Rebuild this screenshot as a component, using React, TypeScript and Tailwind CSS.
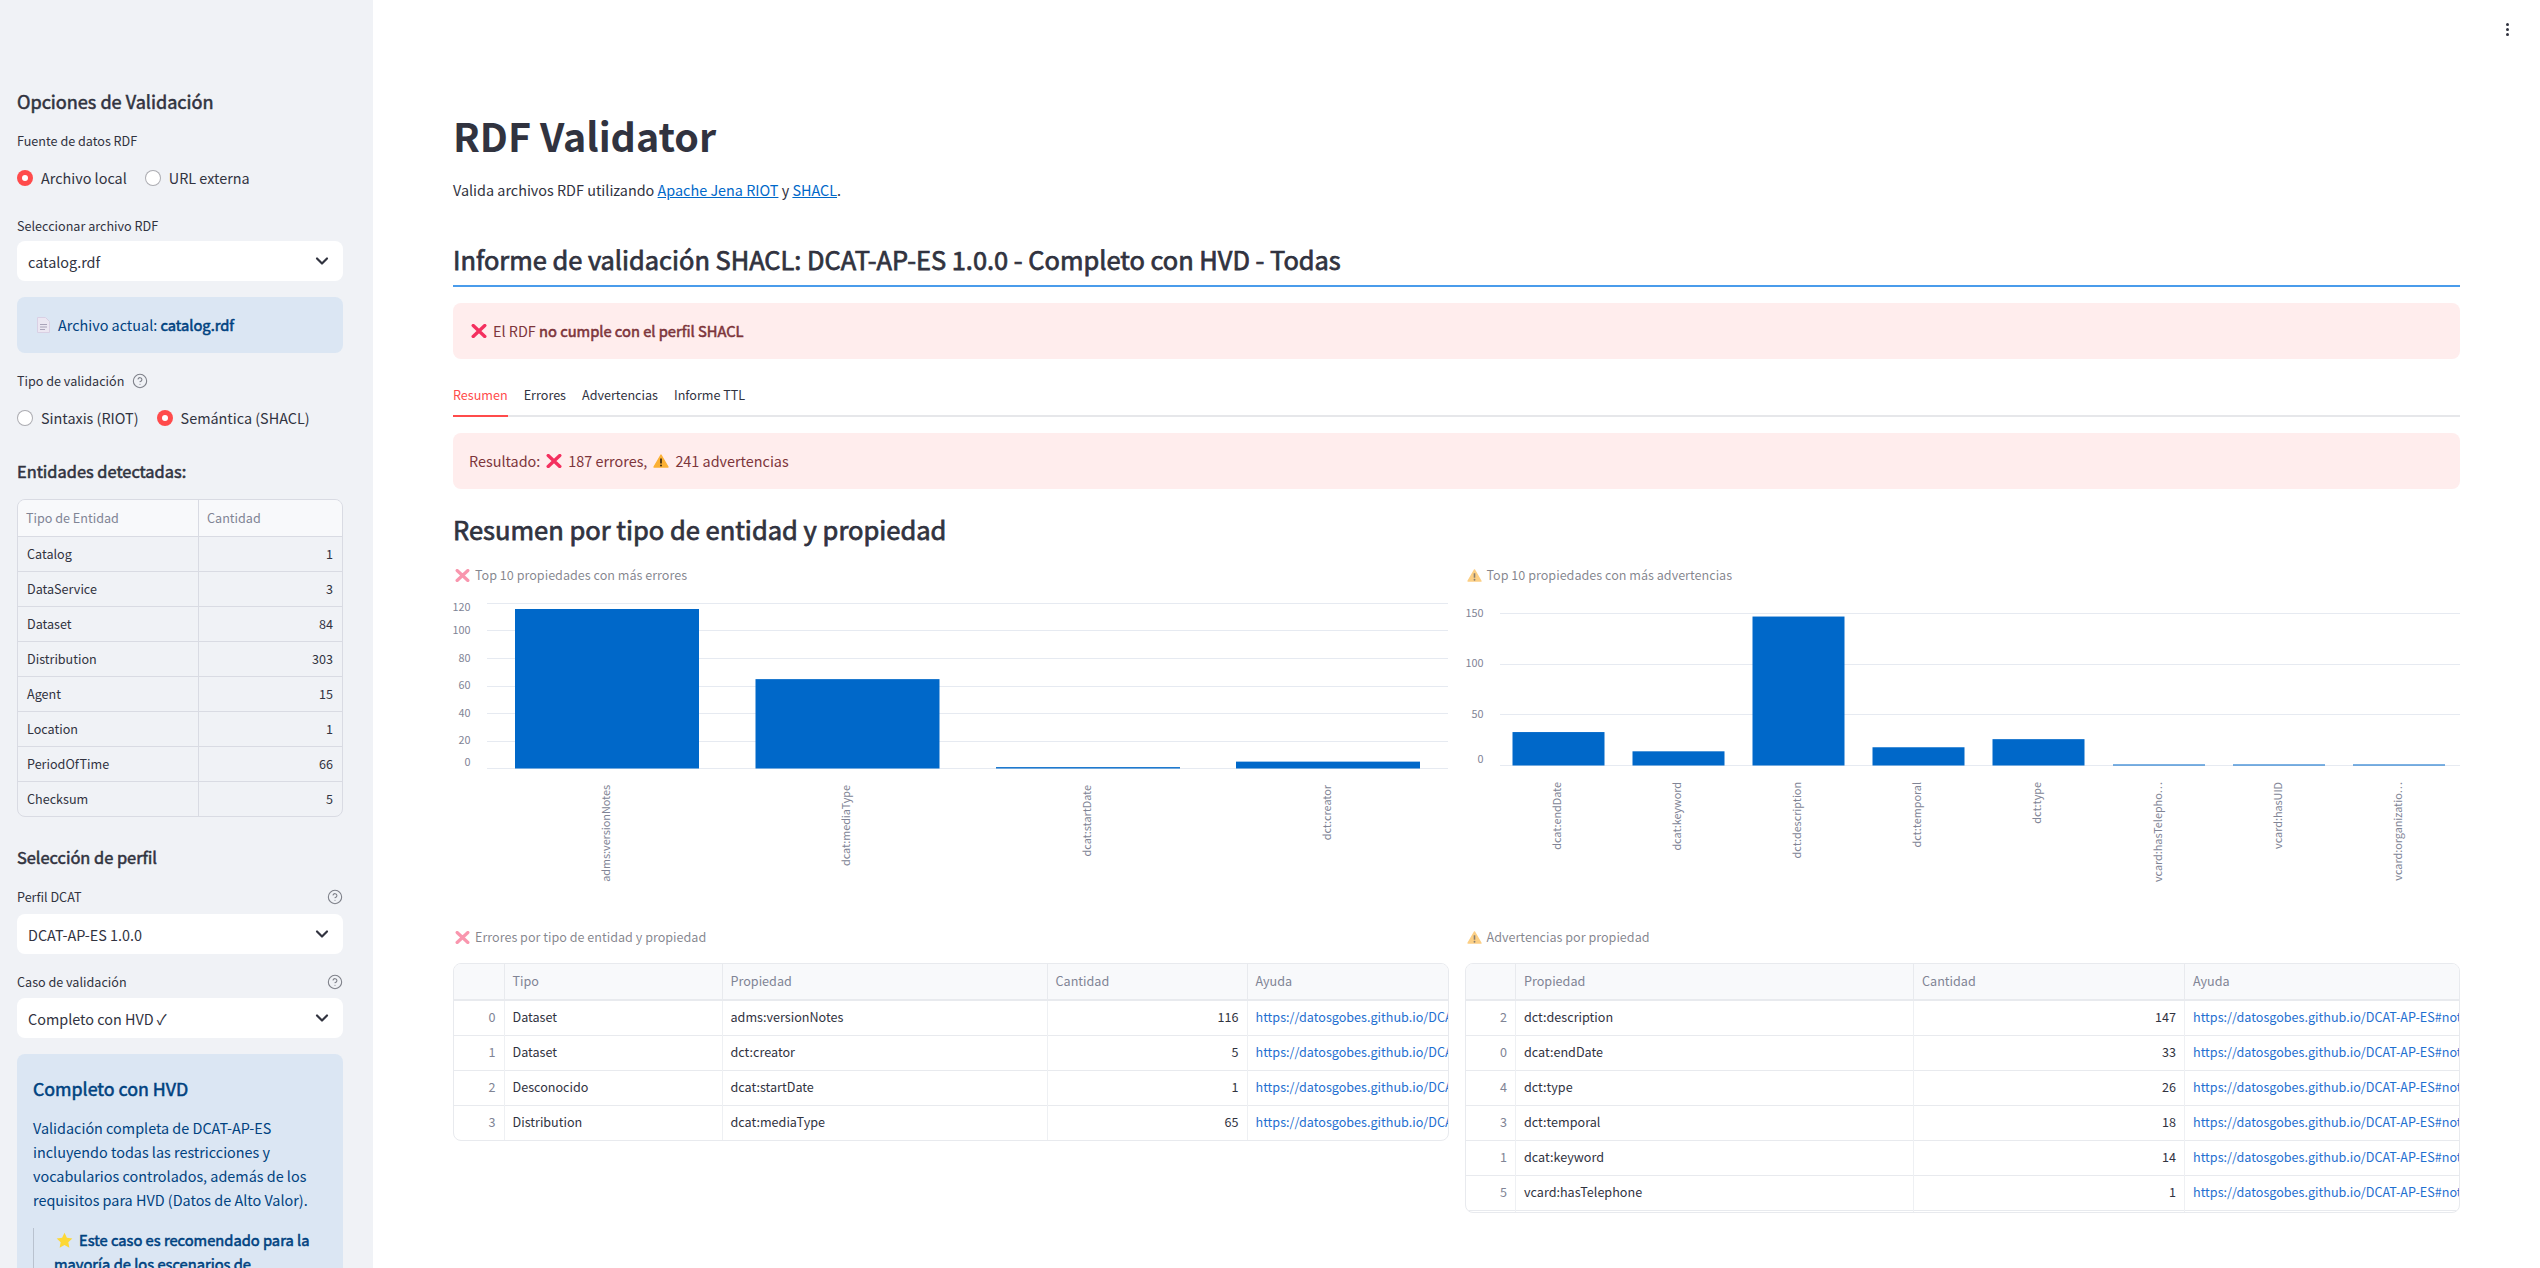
import { ChevronDown, CircleHelp } from "lucide-react";

// Noto Sans CJK carries Source Sans latin glyphs at a larger scale, hence the smaller sizes below
const FONT = "font-['Noto_Sans_CJK_SC','Noto_Sans',sans-serif]";
// only regular and bold are installed, so semibold headings get a thin stroke on regular
const SEMI = "font-normal [-webkit-text-stroke-width:0.55px]";
const SEMI_LARGE = "font-normal [-webkit-text-stroke-width:0.75px]";

const entities = [
  ["Catalog", 1],
  ["DataService", 3],
  ["Dataset", 84],
  ["Distribution", 303],
  ["Agent", 15],
  ["Location", 1],
  ["PeriodOfTime", 66],
  ["Checksum", 5],
] as const;

const errorRows = [
  [0, "Dataset", "adms:versionNotes", 116],
  [1, "Dataset", "dct:creator", 5],
  [2, "Desconocido", "dcat:startDate", 1],
  [3, "Distribution", "dcat:mediaType", 65],
] as const;

const warningRows = [
  [2, "dct:description", 147],
  [0, "dcat:endDate", 33],
  [4, "dct:type", 26],
  [3, "dct:temporal", 18],
  [1, "dcat:keyword", 14],
  [5, "vcard:hasTelephone", 1],
  [6, "vcard:hasUID", 1],
] as const;

function CrossIcon({ className }: { className?: string }) {
  return (
    <svg viewBox="0 0 16 14" className={className} aria-hidden="true">
      <path d="M2.2 1.6 L13.8 12.4 M13.8 1.6 L2.2 12.4" stroke="#f4305f" strokeWidth="3.4" strokeLinecap="round" fill="none" />
    </svg>
  );
}

function WarnIcon({ className }: { className?: string }) {
  return (
    <svg viewBox="0 0 16 14" className={className} aria-hidden="true">
      <path d="M8 1 L15 13 H1 Z" fill="#fbb034" stroke="#fbb034" strokeWidth="1.4" strokeLinejoin="round" />
      <path d="M8 4.6 V9.4" stroke="#3b2a12" strokeWidth="1.7" />
      <circle cx="8" cy="11.6" r="1" fill="#3b2a12" />
    </svg>
  );
}

function Radio({ label, checked }: { label: string; checked?: boolean }) {
  return (
    <div className="flex items-center gap-2">
      {checked ? (
        <span className="flex h-4 w-4 items-center justify-center rounded-full bg-[#ff4b4b]">
          <span className="h-1.5 w-1.5 rounded-full bg-white" />
        </span>
      ) : (
        <span className="h-4 w-4 rounded-full border border-[#31333f66] bg-white" />
      )}
      <span className="text-[14.4px] leading-6">{label}</span>
    </div>
  );
}

function FieldLabel({ children, className }: { children: React.ReactNode; className?: string }) {
  return <div className={`text-[12.6px] leading-5 ${className ?? ""}`}>{children}</div>;
}

function Help() {
  return <CircleHelp size={16} strokeWidth={1.6} className="text-[#31333f99]" />;
}

function SelectBox({ value, className }: { value: string; className?: string }) {
  return (
    <div className={`flex h-10 items-center justify-between rounded-lg bg-white pl-[11px] pr-[11px] text-[14.4px] ${className ?? ""}`}>
      <span className="pt-px">{value}</span>
      <ChevronDown size={20} strokeWidth={2.6} className="text-[#31333f]" />
    </div>
  );
}

function Sidebar() {
  return (
    <aside className="h-screen w-[373px] shrink-0 overflow-hidden bg-[#f0f2f6] pl-[17px] pr-[30px] pt-[87px]">
      <h2 className={`text-[18.1px] leading-7 ${SEMI}`}>Opciones de Validación</h2>
      <FieldLabel className="mt-4">Fuente de datos RDF</FieldLabel>
      <div className="mt-[15px] flex gap-[18px]">
        <Radio label="Archivo local" checked />
        <Radio label="URL externa" />
      </div>
      <FieldLabel className="mt-[26px]">Seleccionar archivo RDF</FieldLabel>
      <SelectBox value="catalog.rdf" className="mt-[5px]" />
      <div className="mt-4 flex h-14 items-center rounded-lg bg-[#dbe6f3] pl-[20px] text-[14.4px] text-[#004280]">
        <svg viewBox="0 0 13 16" className="mr-2 h-4 w-[13px]" aria-hidden="true">
          <path d="M.5 .5 H8.5 L12.5 4.5 V15.5 H.5 Z" fill="#ece7f2" stroke="#d9d0e4" />
          <path d="M3 7.5 H10 M3 10 H10 M3 12.5 H8" stroke="#a9a3b8" strokeWidth="1" />
        </svg>
        <span>
          Archivo actual: <b className={`text-[14.7px] ${SEMI}`}>catalog.rdf</b>
        </span>
      </div>
      <FieldLabel className="mt-[18px] flex items-center gap-2">
        Tipo de validación
        <Help />
      </FieldLabel>
      <div className="mt-[15px] flex gap-[18px]">
        <Radio label="Sintaxis (RIOT)" />
        <Radio label="Semántica (SHACL)" checked />
      </div>
      <h3 className={`mt-[27px] text-[16.4px] leading-7 ${SEMI}`}>Entidades detectadas:</h3>
      <div className="mt-[14px] overflow-hidden rounded-lg border border-[#d9dbe3] text-[12.6px]">
        <div className="flex h-9 items-center bg-[#f8f9fb] text-[#808495]">
          <div className="w-[181px] border-r border-[#d9dbe3] pl-[8px] leading-9">Tipo de Entidad</div>
          <div className="pl-[8px]">Cantidad</div>
        </div>
        {entities.map(([name, count]) => (
          <div key={name} className="flex h-[35px] items-center border-t border-[#d9dbe3]">
            <div className="w-[181px] border-r border-[#d9dbe3] pl-[9px] leading-[34px]">{name}</div>
            <div className="flex-1 pr-[9px] text-right">{count}</div>
          </div>
        ))}
      </div>
      <h3 className={`mt-[26px] text-[16.4px] leading-7 ${SEMI}`}>Selección de perfil</h3>
      <FieldLabel className="mt-4 flex items-center justify-between">
        Perfil DCAT
        <Help />
      </FieldLabel>
      <SelectBox value="DCAT-AP-ES 1.0.0" className="mt-[7px]" />
      <FieldLabel className="mt-[18px] flex items-center justify-between">
        Caso de validación
        <Help />
      </FieldLabel>
      <SelectBox value="Completo con HVD ✓" className="mt-[6px]" />
      <div className="mt-4 rounded-lg bg-[#dbe6f3] pb-6 pl-4 pr-3 pt-5 text-[14.4px] text-[#004280]">
        <h4 className={`text-[17.8px] leading-7 ${SEMI}`}>Completo con HVD</h4>
        <p className="mt-[14px] leading-6">
          Validación completa de DCAT-AP-ES
          <br />
          incluyendo todas las restricciones y
          <br />
          vocabularios controlados, además de los
          <br />
          requisitos para HVD (Datos de Alto Valor).
        </p>
        <blockquote className={`mt-4 border-l border-[#31333f33] pl-5 text-[14.7px] leading-6 ${SEMI}`}>
          <svg viewBox="0 0 20 20" className="mb-[3px] ml-[2px] mr-[6px] inline-block h-[17px] w-[17px]" aria-hidden="true">
            <path d="M10 1 L12.8 6.9 19.2 7.7 14.5 12.1 15.7 18.5 10 15.4 4.3 18.5 5.5 12.1 .8 7.7 7.2 6.9 Z" fill="#fdd835" />
          </svg>
          Este caso es recomendado para la
          <br />
          mayoría de los escenarios de
        </blockquote>
      </div>
    </aside>
  );
}

type ChartProps = {
  gridBottom: number;
  axisLeft: number;
  ticks: { value: number; y: number; labelY: number }[];
  unit: number;
  bars: { label: string; value: number; x: number }[];
  barWidth: number;
  labelTop: number;
};

// coordinates are relative to the top left of the chart svg
function BarChart({ gridBottom, axisLeft, ticks, unit, bars, barWidth, labelTop }: ChartProps) {
  return (
    <svg width="995" height="338" className="block">
      {ticks.map((t) => (
        <g key={t.value}>
          <line x1={axisLeft} x2="995" y1={t.y + 0.5} y2={t.y + 0.5} stroke="#e6eaf1" />
          <text x={axisLeft - 16.5} y={t.labelY} textAnchor="end" dominantBaseline="middle" fontSize="10.8" fill="#808495">
            {t.value}
          </text>
        </g>
      ))}
      {bars.map((b) => (
        <g key={b.label}>
          <rect x={b.x} y={gridBottom - b.value * unit} width={barWidth} height={b.value * unit} fill="#0068c9" />
          <text
            transform={`translate(${b.x + barWidth / 2} ${labelTop}) rotate(-90)`}
            textAnchor="end"
            dominantBaseline="middle"
            fontSize="10.8"
            fill="#808495"
          >
            {b.label}
          </text>
        </g>
      ))}
    </svg>
  );
}

function Caption({ icon, children, className }: { icon: "error" | "warn"; children: React.ReactNode; className?: string }) {
  return (
    <div className={`flex h-6 items-center gap-[5px] pl-[2px] text-[12.6px] text-[#31333f99] ${className ?? ""}`}>
      {icon === "error" ? <CrossIcon className="h-[13px] w-[15px] opacity-50" /> : <WarnIcon className="h-[13px] w-[15px] opacity-60" />}
      <span>{children}</span>
    </div>
  );
}

function HeaderCell({ width, children }: { width: number | string; children?: React.ReactNode }) {
  return (
    <th style={{ width }} className="overflow-hidden border-r border-b-2 border-[#e8eaee] bg-[#f8f9fb] pl-2 text-left font-normal text-[#808495]">
      {children}
    </th>
  );
}

type DataTableProps = {
  widths: number[];
  heads: string[];
  rows: readonly (readonly (string | number)[])[];
  height: number;
  link: string;
};

function DataTable({ widths, heads, rows, height, link }: DataTableProps) {
  return (
    <div style={{ height }} className="mt-[14px] overflow-hidden rounded-lg border border-[#e8eaee] text-[12.6px]">
      <table className="table-fixed border-collapse" style={{ width: widths.reduce((a, b) => a + b, 0) }}>
        <thead>
          <tr className="h-[36px]">
            <HeaderCell width={widths[0]} />
            {heads.map((h, i) => (
              <HeaderCell key={h} width={widths[i + 1]}>
                {h}
              </HeaderCell>
            ))}
          </tr>
        </thead>
        <tbody>
          {rows.map((row) => (
            <tr key={String(row[0])} className="h-[35px] border-b border-[#e8eaee]">
              {row.map((cell, i) => (
                <td
                  key={i}
                  className={`overflow-hidden border-r border-[#eef0f3] px-2 whitespace-nowrap ${i === 0 ? "text-right text-[#808495]" : ""} ${typeof cell === "number" && i > 0 ? "text-right" : ""}`}
                >
                  {cell}
                </td>
              ))}
              <td className="overflow-hidden px-2 whitespace-nowrap text-[#1f6fd0]">{link}</td>
            </tr>
          ))}
        </tbody>
      </table>
    </div>
  );
}

function Alert({ children, className }: { children: React.ReactNode; className?: string }) {
  return <div className={`flex h-14 items-center rounded-lg bg-[#ffeded] pl-[16px] text-[14.4px] text-[#7d353b] ${className ?? ""}`}>{children}</div>;
}

function Main() {
  return (
    <main className="relative h-screen min-w-0 flex-1 overflow-hidden px-20 pt-[107px]">
      <div className="absolute top-[23px] right-[31px] flex flex-col gap-[2px]">
        <span className="h-[3px] w-[3px] rounded-full bg-[#31333f]" />
        <span className="h-[3px] w-[3px] rounded-full bg-[#31333f]" />
        <span className="h-[3px] w-[3px] rounded-full bg-[#31333f]" />
      </div>
      <h1 className="text-[39.4px] leading-[56px] font-bold">RDF Validator</h1>
      <p className="mt-[15px] text-[14.4px] leading-6">
        Valida archivos RDF utilizando <a className="text-[#0068c9] underline">Apache Jena RIOT</a> y <a className="text-[#0068c9] underline">SHACL</a>.
      </p>
      <h2 className={`mt-[37px] border-b-2 border-[#4a9ceb] pb-[6px] text-[25.4px] leading-10 ${SEMI_LARGE}`}>
        Informe de validación SHACL: DCAT-AP-ES 1.0.0 - Completo con HVD - Todas
      </h2>
      <Alert className="mt-4">
        <CrossIcon className="ml-[2px] mr-[6px] h-[14px] w-4" />
        <span>
          El RDF <b className={`text-[14.7px] ${SEMI}`}>no cumple con el perfil SHACL</b>
        </span>
      </Alert>
      <div className="mt-[17px] flex h-[41px] gap-4 border-b-2 border-[#e6e7ea] text-[12.6px]">
        <div className="-mb-[2px] border-b-2 border-[#ff4b4b] pt-[10px] text-[#ff4b4b]">Resumen</div>
        <div className="pt-[10px]">Errores</div>
        <div className="pt-[10px]">Advertencias</div>
        <div className="pt-[10px]">Informe TTL</div>
      </div>
      <Alert className="mt-4">
        Resultado:
        <CrossIcon className="mx-[6px] h-[14px] w-4" />
        187 errores,
        <WarnIcon className="mx-[6px] h-[14px] w-4" />
        241 advertencias
      </Alert>
      <h2 className={`mt-5 text-[25.5px] leading-10 ${SEMI_LARGE}`}>Resumen por tipo de entidad y propiedad</h2>
      <div className="mt-[14px] grid grid-cols-2 gap-x-4">
        <div>
          <Caption icon="error">Top 10 propiedades con más errores</Caption>
          <BarChart
            gridBottom={181.5}
            axisLeft={34}
            unit={1.375}
            ticks={[
              { value: 120, y: 16, labelY: 21 },
              { value: 100, y: 43, labelY: 44 },
              { value: 80, y: 71, labelY: 72 },
              { value: 60, y: 99, labelY: 99 },
              { value: 40, y: 126, labelY: 127 },
              { value: 20, y: 154, labelY: 154 },
              { value: 0, y: 181, labelY: 176 },
            ]}
            bars={[
              { label: "adms:versionNotes", value: 116, x: 62 },
              { label: "dcat:mediaType", value: 65, x: 302.5 },
              { label: "dcat:startDate", value: 1, x: 543 },
              { label: "dct:creator", value: 5, x: 783 },
            ]}
            barWidth={184}
            labelTop={198}
          />
        </div>
        <div>
          <Caption icon="warn">Top 10 propiedades con más advertencias</Caption>
          <BarChart
            gridBottom={178.5}
            axisLeft={35}
            unit={1.0133}
            ticks={[
              { value: 150, y: 26, labelY: 27 },
              { value: 100, y: 77, labelY: 77 },
              { value: 50, y: 127, labelY: 128 },
              { value: 0, y: 178, labelY: 173 },
            ]}
            bars={[
              { label: "dcat:endDate", value: 33, x: 47.5 },
              { label: "dcat:keyword", value: 14, x: 167.5 },
              { label: "dct:description", value: 147, x: 287.5 },
              { label: "dct:temporal", value: 18, x: 407.5 },
              { label: "dct:type", value: 26, x: 527.5 },
              { label: "vcard:hasTelepho…", value: 1, x: 648 },
              { label: "vcard:hasUID", value: 1, x: 768 },
              { label: "vcard:organizatio…", value: 1, x: 888 },
            ]}
            barWidth={92}
            labelTop={195}
          />
        </div>
        <div>
          <Caption icon="error">Errores por tipo de entidad y propiedad</Caption>
          <DataTable
            widths={[50, 218, 325, 200, 400]}
            heads={["Tipo", "Propiedad", "Cantidad", "Ayuda"]}
            rows={errorRows}
            height={178}
            link="https://datosgobes.github.io/DCAT"
          />
        </div>
        <div>
          <Caption icon="warn">Advertencias por propiedad</Caption>
          <DataTable
            widths={[50, 398, 271, 400]}
            heads={["Propiedad", "Cantidad", "Ayuda"]}
            rows={warningRows}
            height={250}
            link="https://datosgobes.github.io/DCAT-AP-ES#notas"
          />
        </div>
      </div>
    </main>
  );
}

export default function App() {
  return (
    <div className={`flex h-screen overflow-hidden bg-white text-[#31333f] ${FONT}`}>
      <Sidebar />
      <Main />
    </div>
  );
}
